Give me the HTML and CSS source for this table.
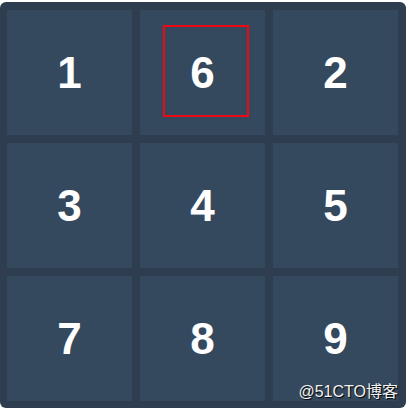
FILE: index.html
```html
<!DOCTYPE html>
<html>
<head>
<meta charset="utf-8">
<link rel="stylesheet" href="styles.css">
</head>
<body>
<div class="board">
  <div class="cell">1</div>
  <div class="cell">6</div>
  <div class="cell">2</div>
  <div class="cell">3</div>
  <div class="cell">4</div>
  <div class="cell">5</div>
  <div class="cell">7</div>
  <div class="cell">8</div>
  <div class="cell">9</div>
  <div class="focus"></div>
  <div class="watermark">@51CTO博客</div>
</div>
</body>
</html>
```

FILE: styles.css
```css
html, body {
  margin: 0;
  padding: 0;
  background: #ffffff;
}
body {
  padding-top: 2px;
}
.board {
  position: relative;
  width: 391px;
  height: 391px;
  padding: 8px 8px 7px 7px;
  background: #2e3e50;
  border-radius: 6px;
  display: grid;
  grid-template-columns: repeat(3, 125px);
  grid-template-rows: repeat(3, 125px);
  gap: 8px;
}
.cell {
  background: #35495e;
  color: #ffffff;
  font-family: "Liberation Sans", Arial, sans-serif;
  font-weight: bold;
  font-size: 44px;
  display: flex;
  align-items: center;
  justify-content: center;
}
.focus {
  position: absolute;
  left: 163px;
  top: 23px;
  width: 82px;
  height: 88px;
  border: 2px solid #ee0a14;
}
.watermark {
  position: absolute;
  right: 8px;
  bottom: 7px;
  font-family: "Liberation Sans", "Noto Sans CJK SC", sans-serif;
  font-size: 16px;
  line-height: 18px;
  color: #f2f2f2;
  text-shadow: 1px 1px 1px #000000;
}
```
